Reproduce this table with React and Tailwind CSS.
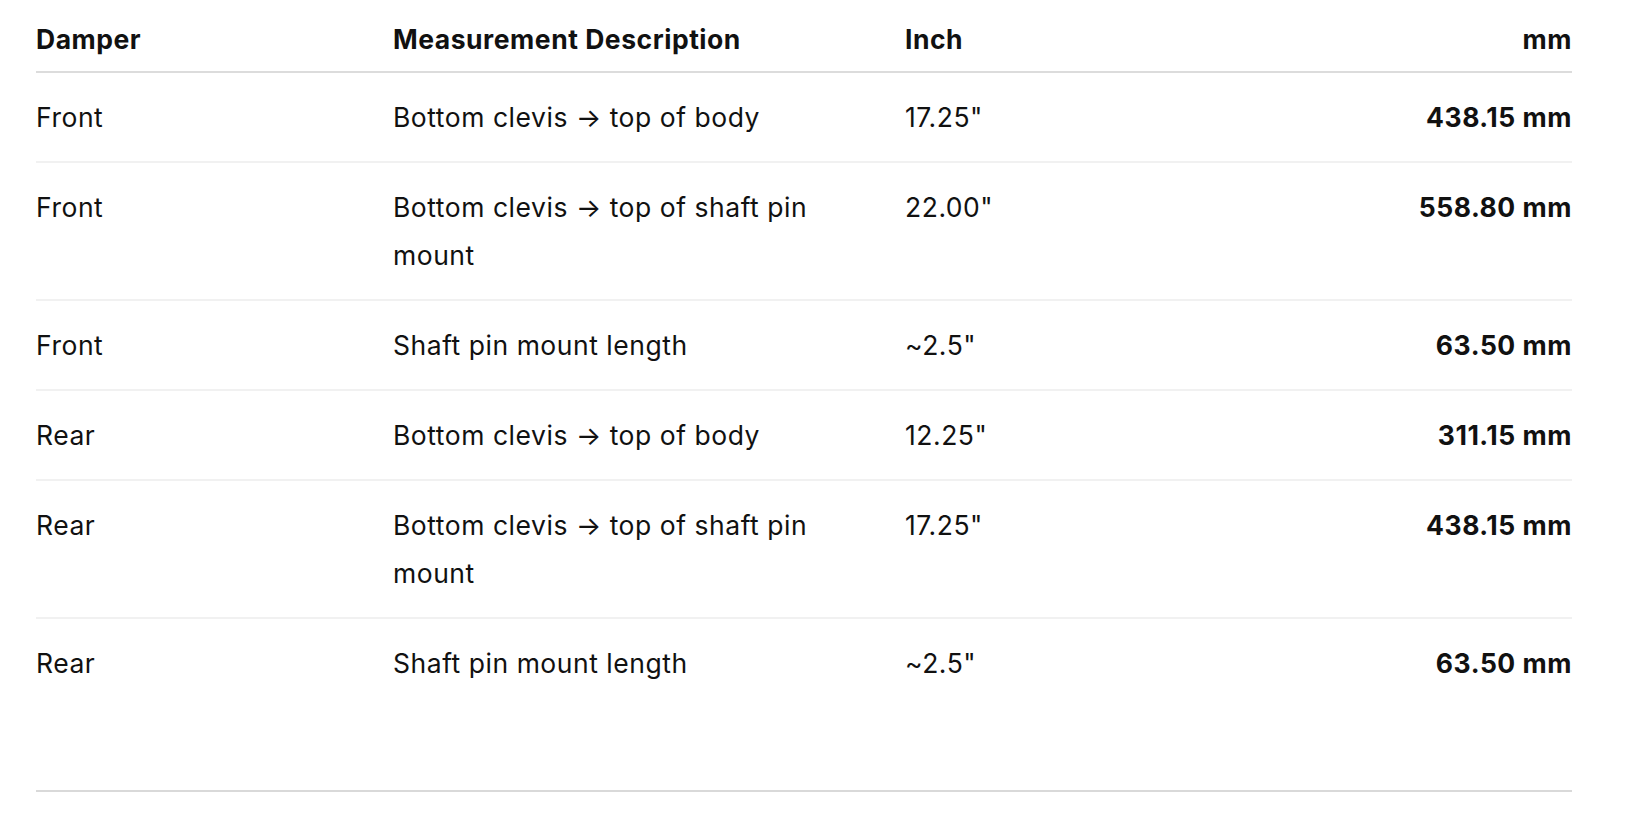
import React from "react";

const rows = [
  { damper: "Front", desc: "Bottom clevis → top of body", inch: '17.25"', mm: "438.15 mm" },
  { damper: "Front", desc: "Bottom clevis → top of shaft pin mount", inch: '22.00"', mm: "558.80 mm" },
  { damper: "Front", desc: "Shaft pin mount length", inch: '~2.5"', mm: "63.50 mm" },
  { damper: "Rear", desc: "Bottom clevis → top of body", inch: '12.25"', mm: "311.15 mm" },
  { damper: "Rear", desc: "Bottom clevis → top of shaft pin mount", inch: '17.25"', mm: "438.15 mm" },
  { damper: "Rear", desc: "Shaft pin mount length", inch: '~2.5"', mm: "63.50 mm" },
];

const App = () => {
  return (
    <div className="min-h-screen bg-white font-['Inter',sans-serif] text-[#111111]">
      <div className="ml-[36px] w-[1536px]">
        <table className="w-full table-fixed border-collapse text-[26.5px] leading-[48px] tracking-[0.02em]">
          <colgroup>
            <col className="w-[357px]" />
            <col className="w-[512px]" />
            <col className="w-[340px]" />
            <col />
          </colgroup>
          <thead>
            <tr className="border-b-2 border-[#dcdcdc]">
              <th className="pt-[15px] pb-2 pr-8 text-left font-bold">Damper</th>
              <th className="pt-[15px] pb-2 pr-8 text-left font-bold">Measurement Description</th>
              <th className="pt-[15px] pb-2 pr-8 text-left font-bold">Inch</th>
              <th className="pt-[15px] pb-2 text-right font-bold">mm</th>
            </tr>
          </thead>
          <tbody>
            {rows.map((r, i) => (
              <tr
                key={i}
                className={i < rows.length - 1 ? "border-b-2 border-[#f1f1f1]" : ""}
              >
                <td className="py-5 pr-8 align-top">{r.damper}</td>
                <td className="py-5 pr-12 align-top">{r.desc}</td>
                <td className="py-5 pr-8 align-top">{r.inch}</td>
                <td className="py-5 text-right align-top font-bold">{r.mm}</td>
              </tr>
            ))}
          </tbody>
        </table>
        <div className="mt-[83px] border-t-2 border-[#d9d9d9]" />
      </div>
    </div>
  );
};

export default App;
